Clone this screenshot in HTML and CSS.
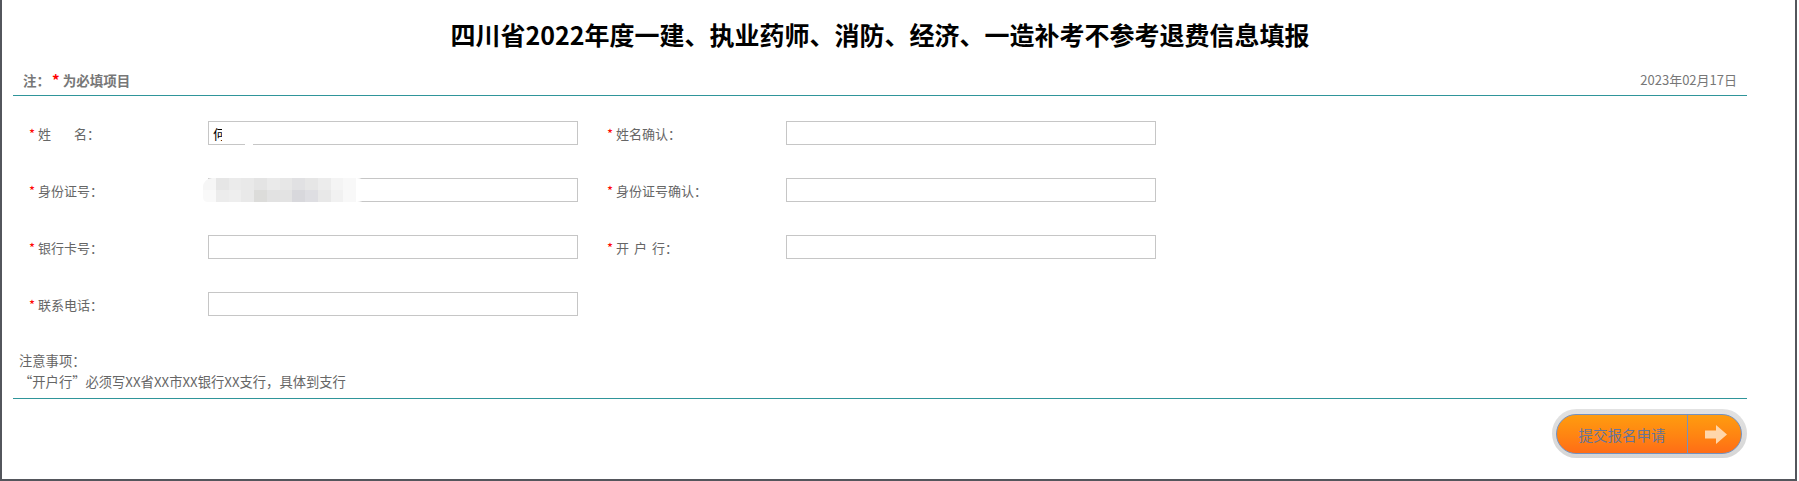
FILE: index.html
```html
<!DOCTYPE html>
<html lang="zh-CN">
<head>
<meta charset="utf-8">
<title>四川省2022年度一建、执业药师、消防、经济、一造补考不参考退费信息填报</title>
<link rel="stylesheet" href="styles.css">
</head>
<body>
<div class="frame">
  <div class="container">
    <h1 class="title">四川省2022年度一建、执业药师、消防、经济、一造补考不参考退费信息填报</h1>
    <div class="header-row">
      <span class="note">注：<span class="req-bold">*</span> 为必填项目</span>
      <span class="date">2023年02月17日</span>
    </div>
    <form class="form">
      <div class="field">
        <label class="label"><span class="req">*</span>姓<span class="gap"></span>名：</label>
        <div class="input-wrap">
          <input class="input" type="text" value="何">
          <span class="mask mask-a"></span>
          <span class="mask mask-b"></span>
        </div>
      </div>
      <div class="field">
        <label class="label"><span class="req">*</span>姓名确认：</label>
        <div class="input-wrap"><input class="input" type="text"></div>
      </div>
      <div class="field">
        <label class="label"><span class="req">*</span>身份证号：</label>
        <div class="input-wrap">
          <input class="input" type="text">
          <div class="mosaic">
            <span class="m m1"></span><span class="m m2"></span><span class="m m3"></span><span class="m m4"></span><span class="m m5"></span><span class="m m6"></span><span class="m m7"></span><span class="m m8"></span><span class="m m9"></span><span class="m m10"></span><span class="m m11"></span><span class="m m12"></span><span class="m m13"></span>
            <span class="m m14"></span><span class="m m15"></span><span class="m m16"></span><span class="m m17"></span><span class="m m18"></span><span class="m m19"></span><span class="m m20"></span><span class="m m21"></span><span class="m m22"></span><span class="m m23"></span><span class="m m24"></span><span class="m m25"></span><span class="m m26"></span>
          </div>
        </div>
      </div>
      <div class="field">
        <label class="label"><span class="req">*</span>身份证号确认：</label>
        <div class="input-wrap"><input class="input" type="text"></div>
      </div>
      <div class="field">
        <label class="label"><span class="req">*</span>银行卡号：</label>
        <div class="input-wrap"><input class="input" type="text"></div>
      </div>
      <div class="field">
        <label class="label"><span class="req">*</span>开<span class="sp"></span>户<span class="sp"></span>行：</label>
        <div class="input-wrap"><input class="input" type="text"></div>
      </div>
      <div class="field">
        <label class="label"><span class="req">*</span>联系电话：</label>
        <div class="input-wrap"><input class="input" type="text"></div>
      </div>
    </form>
    <div class="notes">
      <p class="notes-line">注意事项：</p>
      <p class="notes-line">“开户行”必须写XX省XX市XX银行XX支行，具体到支行</p>
    </div>
    <div class="actions">
      <div class="btn-ring">
        <button class="btn" type="button">
          <span class="btn-text">提交报名申请</span>
          <span class="btn-icon">
            <svg width="22" height="19" viewBox="0 0 22 19"><path d="M0 5.5 H11 V0 L22 9.5 L11 19 V13.5 H0 Z" fill="#ffd6ab"/></svg>
          </span>
        </button>
      </div>
    </div>
  </div>
</div>
</body>
</html>
```

FILE: styles.css
```css
* { box-sizing: border-box; }

html, body {
  margin: 0;
  padding: 0;
  background: #ffffff;
}

body {
  font-family: "Noto Sans CJK SC", "Microsoft YaHei", sans-serif;
  color: #666666;
}

.frame {
  width: 1797px;
  height: 481px;
  border-left: 2px solid #53565c;
  border-right: 2px solid #53565c;
  border-bottom: 2px solid #53565c;
  background: #ffffff;
}

.container {
  margin-left: 11px;
  width: 1734px;
}

.title {
  margin: 0;
  padding-top: 16px;
  font-size: 25px;
  line-height: 36px;
  font-weight: bold;
  color: #000000;
  text-align: center;
}

.header-row {
  display: flex;
  justify-content: space-between;
  align-items: center;
  margin-top: 18px;
  padding: 0 10px 5px 10px;
  line-height: 20px;
  border-bottom: 1px solid #2f959a;
  font-size: 13px;
  color: #777777;
}

.note {
  font-weight: bold;
  font-size: 13.5px;
}

.req-bold {
  color: #ff0000;
  font-size: 15px;
  margin-left: 2px;
}

.date {
  font-weight: normal;
  font-size: 13px;
}

.form {
  display: grid;
  grid-template-columns: 549px 549px;
  column-gap: 29px;
  row-gap: 33px;
  margin: 25px 0 0 0;
  padding-left: 16px;
}

.field {
  display: flex;
  align-items: center;
  height: 24px;
}

.label {
  width: 179px;
  flex: none;
  font-size: 13px;
  line-height: 24px;
  color: #666666;
  padding-top: 2px;
}

.req {
  color: #ff0000;
  display: inline-block;
  width: 9px;
}

.gap {
  display: inline-block;
  width: 23px;
}

.sp {
  display: inline-block;
  width: 5px;
}

.input-wrap {
  position: relative;
  width: 370px;
  height: 24px;
}

.input {
  display: block;
  width: 370px;
  height: 24px;
  margin: 0;
  border: 1px solid #c6c6c6;
  border-radius: 0;
  padding: 0 4px;
  font-family: "Noto Sans CJK SC", sans-serif;
  font-size: 13px;
  color: #000000;
  background: #ffffff;
  outline: none;
}

.mask {
  position: absolute;
  background: #ffffff;
}

.mask-a {
  left: 14px;
  top: 1px;
  width: 40px;
  height: 22px;
}

.mask-b {
  left: 37px;
  top: 22px;
  width: 8px;
  height: 3px;
}

.mosaic {
  position: absolute;
  left: -5px;
  top: 0;
  width: 166px;
  height: 24px;
  display: grid;
  grid-template-columns: repeat(13, 1fr);
  grid-template-rows: 12px 12px;
  border-radius: 12px 16px 16px 6px;
  overflow: hidden;
}

.m { display: block; }
.m1 { background: #f6f6f6; }
.m2 { background: #e6e6e6; }
.m3 { background: #ebebeb; }
.m4 { background: #e9e9e9; }
.m5 { background: #e4e4e4; }
.m6 { background: #eaeaea; }
.m7 { background: #e7e7e7; }
.m8 { background: #e1e1e3; }
.m9 { background: #e6e6e6; }
.m10 { background: #ececec; }
.m11 { background: #f4f4f4; }
.m12 { background: #f8f8f8; }
.m13 { background: #ffffff; }
.m14 { background: #f9f9f9; }
.m15 { background: #ececec; }
.m16 { background: #eeeeee; }
.m17 { background: #e9e9e9; }
.m18 { background: #dcdcda; }
.m19 { background: #e2e2e2; }
.m20 { background: #e3e3e3; }
.m21 { background: #d8d8dc; }
.m22 { background: #dedee2; }
.m23 { background: #e8e8e8; }
.m24 { background: #f1f1f1; }
.m25 { background: #f8f8f8; }
.m26 { background: #ffffff; }

.notes {
  margin-top: 34px;
  padding: 0 0 6px 6px;
  border-bottom: 1px solid #2f959a;
}

.notes-line {
  margin: 0;
  font-size: 13.3px;
  line-height: 21px;
  color: #666666;
}

.actions {
  display: flex;
  justify-content: flex-end;
  margin-top: 10px;
}

.btn-ring {
  padding: 5px 5px 4px 4px;
  border-radius: 25px;
  background: linear-gradient(#e2e2e2, #d6d6d6);
}

.btn {
  display: flex;
  align-items: stretch;
  width: 186px;
  height: 40px;
  margin: 0;
  padding: 0;
  border: 1px solid #7592bf;
  border-radius: 20px;
  background: linear-gradient(#ff9c0f, #ff8412 55%, #ff6d16);
  font-family: "Noto Sans CJK SC", sans-serif;
  cursor: pointer;
  overflow: hidden;
}

.btn-text {
  width: 131px;
  display: flex;
  align-items: center;
  justify-content: center;
  font-size: 14.5px;
  color: #66749a;
  border-right: 1px solid #7592bf;
}

.btn-icon {
  flex: 1;
  display: flex;
  align-items: center;
  justify-content: center;
  padding-left: 2px;
}
```
